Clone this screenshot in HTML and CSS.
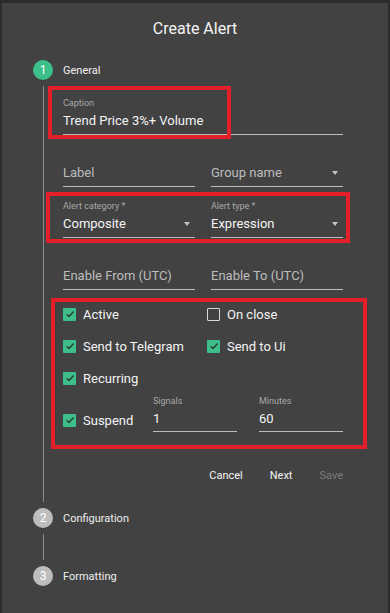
FILE: index.html
```html
<!DOCTYPE html>
<html>
<head>
<meta charset="utf-8">
<link rel="stylesheet" href="styles.css">
</head>
<body>
<div class="panel">
  <h1 class="title">Create Alert</h1>
  <div class="stepper">
    <div class="step-head">
      <span class="num active">1</span><span class="step-name">General</span>
    </div>
    <div class="step-body">
      <div class="form">
        <div class="field full">
          <div class="lbl">Caption</div>
          <div class="val">Trend Price 3%+ Volume</div>
        </div>
        <div class="row two">
          <div class="field">
            <div class="lbl"></div>
            <div class="val ph">Label</div>
          </div>
          <div class="field select">
            <div class="lbl"></div>
            <div class="val ph">Group name</div>
            <span class="arrow"></span>
          </div>
        </div>
        <div class="row two gap13">
          <div class="field select">
            <div class="lbl">Alert category *</div>
            <div class="val">Composite</div>
            <span class="arrow"></span>
          </div>
          <div class="field select">
            <div class="lbl">Alert type *</div>
            <div class="val">Expression</div>
            <span class="arrow"></span>
          </div>
        </div>
        <div class="row two">
          <div class="field">
            <div class="lbl"></div>
            <div class="val ph">Enable From (UTC)</div>
          </div>
          <div class="field">
            <div class="lbl"></div>
            <div class="val ph">Enable To (UTC)</div>
          </div>
        </div>
        <div class="checks">
          <label class="cb"><span class="box on"><svg viewBox="0 0 12 12"><path d="M2.6 6.2 L5 8.5 L9.6 3.6"/></svg></span>Active</label>
          <label class="cb"><span class="box"></span>On close</label>
          <label class="cb"><span class="box on"><svg viewBox="0 0 12 12"><path d="M2.6 6.2 L5 8.5 L9.6 3.6"/></svg></span>Send to Telegram</label>
          <label class="cb"><span class="box on"><svg viewBox="0 0 12 12"><path d="M2.6 6.2 L5 8.5 L9.6 3.6"/></svg></span>Send to Ui</label>
          <label class="cb"><span class="box on"><svg viewBox="0 0 12 12"><path d="M2.6 6.2 L5 8.5 L9.6 3.6"/></svg></span>Recurring</label>
        </div>
        <div class="suspend">
          <label class="cb sus"><span class="box on"><svg viewBox="0 0 12 12"><path d="M2.6 6.2 L5 8.5 L9.6 3.6"/></svg></span>Suspend</label>
          <div class="field small">
            <div class="lbl">Signals</div>
            <div class="val">1</div>
          </div>
          <div class="field small">
            <div class="lbl">Minutes</div>
            <div class="val">60</div>
          </div>
        </div>
        <div class="actions">
          <span class="btn">Cancel</span>
          <span class="btn">Next</span>
          <span class="btn disabled">Save</span>
        </div>
        <div class="mark m1"></div>
        <div class="mark m2"></div>
        <div class="mark m3"></div>
      </div>
    </div>
    <div class="step-head">
      <span class="num">2</span><span class="step-name">Configuration</span>
    </div>
    <div class="step-body short"></div>
    <div class="step-head">
      <span class="num">3</span><span class="step-name">Formatting</span>
    </div>
  </div>
</div>
</body>
</html>
```
FILE: styles.css
```css
* { box-sizing: border-box; }
html, body { margin: 0; padding: 0; }
body {
  background: #2c2c2c;
  font-family: Roboto, "Liberation Sans", Arial, sans-serif;
  color: #f2f2f2;
  width: 390px;
  height: 613px;
  overflow: hidden;
}
.panel {
  margin: 3px 2px 0 2px;
  height: 610px;
  background: #424242;
  padding-top: 17px;
}
.title {
  margin: 0;
  font-size: 16px;
  font-weight: 400;
  line-height: 18px;
  text-align: center;
  color: #f4f4f4;
}
.stepper {
  padding-left: 31px;
  margin-top: 22px;
}
.step-head {
  display: flex;
  align-items: center;
  height: 20px;
}
.num {
  width: 20px;
  height: 20px;
  border-radius: 50%;
  background: #bdbdbd;
  color: #fff;
  font-size: 12px;
  line-height: 20px;
  text-align: center;
}
.num.active { background: #3cbf8a; }
.step-name {
  margin-left: 10px;
  font-size: 11px;
  color: #f0f0f0;
}
.step-body {
  margin: 6px 0 6px 10px;
  border-left: 1px solid #8c8c8c;
  padding-left: 19px;
}
.step-body.short { height: 26px; }
.form {
  position: relative;
  width: 280px;
  padding-top: 11px;
  padding-bottom: 12px;
}
.field {
  position: relative;
  border-bottom: 1px solid #bdbdbd;
  padding-bottom: 3px;
}
.field.full { width: 280px; }
.lbl {
  height: 12px;
  font-size: 9px;
  line-height: 12px;
  color: #a8a8a8;
  margin-bottom: 2px;
}
.val {
  height: 20px;
  font-size: 13px;
  line-height: 20px;
  color: #f4f4f4;
  white-space: nowrap;
}
.val.ph { color: #bdbdbd; }
.row.two {
  display: grid;
  grid-template-columns: 132px 132px;
  column-gap: 16px;
  margin-top: 14px;
}
.row.gap13 { margin-top: 13px; }
.arrow {
  position: absolute;
  right: 5px;
  bottom: 11px;
  width: 0;
  height: 0;
  border-left: 3.5px solid transparent;
  border-right: 3.5px solid transparent;
  border-top: 4px solid #c4c4c4;
}
.checks {
  display: grid;
  grid-template-columns: 144px 1fr;
  grid-auto-rows: 32px;
  margin-top: 8px;
}
.cb {
  display: flex;
  align-items: center;
  font-size: 13px;
  color: #f4f4f4;
  white-space: nowrap;
}
.box {
  width: 13px;
  height: 13px;
  margin-right: 7px;
  border: 1.5px solid #d8d8d8;
  border-radius: 1px;
  display: flex;
  align-items: center;
  justify-content: center;
  flex: none;
}
.box.on {
  background: #3cbf8a;
  border: none;
}
.box svg {
  width: 12px;
  height: 12px;
  fill: none;
  stroke: #2f3d38;
  stroke-width: 1.5;
}
.suspend {
  display: flex;
  align-items: flex-end;
  margin-top: 1px;
}
.cb.sus {
  width: 90px;
  height: 20px;
  margin-bottom: 2px;
}
.field.small {
  width: 84px;
  padding-bottom: 2px;
}
.field.small + .field.small { margin-left: 22px; }
.actions {
  display: flex;
  justify-content: flex-end;
  align-items: center;
  gap: 27px;
  height: 30px;
  margin-top: 28px;
}
.btn {
  font-size: 11px;
  font-weight: 400;
  color: #f4f4f4;
}
.btn.disabled { color: #7c7c7c; }
.mark {
  position: absolute;
  border: 4px solid #e3202a;
  pointer-events: none;
}
.m1 { left: -15px; top: 0px; width: 183px; height: 53px; }
.m2 { left: -17px; top: 106px; width: 304px; height: 51px; }
.m3 { left: -12px; top: 212px; width: 316px; height: 151px; }
```
